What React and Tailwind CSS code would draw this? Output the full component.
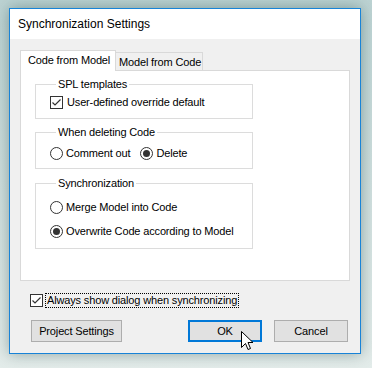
import React from "react";

const font = { fontFamily: '"Liberation Sans", Arial, sans-serif' };

const CheckBox = ({ checked }) => (
    <svg width="13" height="13" viewBox="0 0 13 13" className="shrink-0">
        <rect x="0.5" y="0.5" width="12" height="12" fill="#ffffff" stroke="#333333" />
        {checked && <path d="M2.5 6.5 L5 9 L10.5 3.5" fill="none" stroke="#333333" strokeWidth="1.2" />}
    </svg>
);

const Radio = ({ checked }) => (
    <svg width="13" height="13" viewBox="0 0 13 13" className="shrink-0">
        <circle cx="6.5" cy="6.5" r="6" fill="#ffffff" stroke="#333333" />
        {checked && <circle cx="6.5" cy="6.5" r="3.5" fill="#333333" />}
    </svg>
);

const Group = ({ title, children, className }) => (
    <fieldset className={`w-[218px] border border-[#dcdcdc] px-[14px] ${className}`}>
        <legend className="ml-[6px] px-[2px] leading-[13px] text-[#000]">{title}</legend>
        {children}
    </fieldset>
);

const Button = ({ children, className }) => (
    <button className={`h-[22px] border bg-[#e1e1e1] text-[11px] leading-none text-black ${className}`}>
        {children}
    </button>
);

const App = () => {
    return (
        <div
            className="relative h-[368px] w-[372px] whitespace-nowrap bg-gradient-to-b from-[#bcd3d3] to-[#e3ecea] pl-[9px] pt-[8px] text-[11px] leading-[13px] tracking-[-0.15px] text-black"
            style={font}
        >
            <div className="flex h-[346px] w-[352px] flex-col border border-[#1883d7] bg-[#f0f0f0] shadow-[0_0_14px_rgba(0,40,40,0.35)]">
                {/* title bar */}
                <div className="flex h-[30px] items-center bg-white pl-[8px] text-[12px] tracking-normal">Synchronization Settings</div>

                <div className="flex flex-1 flex-col px-[10px] pt-[11px]">
                    {/* tabs */}
                    <div className="flex h-[20px] items-end">
                        <div className="relative z-10 mb-[-1px] flex h-[21px] w-[96px] items-center border border-b-0 border-[#d9d9d9] bg-white pb-[2px] pl-[7px]">
                            Code from Model
                        </div>
                        <div className="flex h-[18px] w-[87px] items-center border-r border-t border-[#d9d9d9] bg-[#f0f0f0] pl-[3px] pt-[1px]">
                            Model from Code
                        </div>
                    </div>

                    {/* panel */}
                    <div className="h-[211px] w-[330px] border border-[#d9d9d9] bg-white pl-[14px] pt-[7px]">
                        <Group title="SPL templates" className="pb-[9px] pt-[5px]">
                            <label className="flex items-center gap-[4px]">
                                <CheckBox checked />
                                <span>User-defined override default</span>
                            </label>
                        </Group>

                        <Group title="When deleting Code" className="mt-[7px] pb-[8px] pt-[8px]">
                            <div className="flex items-center">
                                <label className="flex items-center gap-[3px]">
                                    <Radio />
                                    <span>Comment out</span>
                                </label>
                                <label className="ml-[10px] flex items-center gap-[3px]">
                                    <Radio checked />
                                    <span>Delete</span>
                                </label>
                            </div>
                        </Group>

                        <Group title="Synchronization" className="mt-[8px] pb-[10px] pt-[11px]">
                            <div className="flex flex-col gap-[11px]">
                                <label className="flex items-center gap-[3px]">
                                    <Radio />
                                    <span>Merge Model into Code</span>
                                </label>
                                <label className="flex items-center gap-[3px]">
                                    <Radio checked />
                                    <span>Overwrite Code according to Model</span>
                                </label>
                            </div>
                        </Group>
                    </div>

                    {/* always show */}
                    <div className="ml-[10px] mt-[12px] flex items-center gap-[2px]">
                        <CheckBox checked />
                        <span className="border border-dotted border-black px-[1px] leading-[13px]">
                            Always show dialog when synchronizing
                        </span>
                    </div>

                    {/* buttons */}
                    <div className="mt-[12px] flex">
                        <Button className="ml-[11px] w-[91px] border-[#adadad]">Project Settings</Button>
                        <Button className="ml-[66px] w-[74px] border-2 border-[#0078d7]">OK</Button>
                        <Button className="ml-[12px] w-[74px] border-[#adadad]">Cancel</Button>
                    </div>
                </div>
            </div>

            {/* mouse pointer */}
            <svg className="absolute left-[241px] top-[331px]" width="13" height="21" viewBox="0 0 13 21">
                <path
                    d="M0.5 0.5 L0.5 16.5 L4.5 12.5 L7 18.5 L9.5 17.5 L7 11.5 L12 11.5 Z"
                    fill="#ffffff"
                    stroke="#000000"
                    strokeLinejoin="miter"
                />
            </svg>
        </div>
    );
};

export default App;
